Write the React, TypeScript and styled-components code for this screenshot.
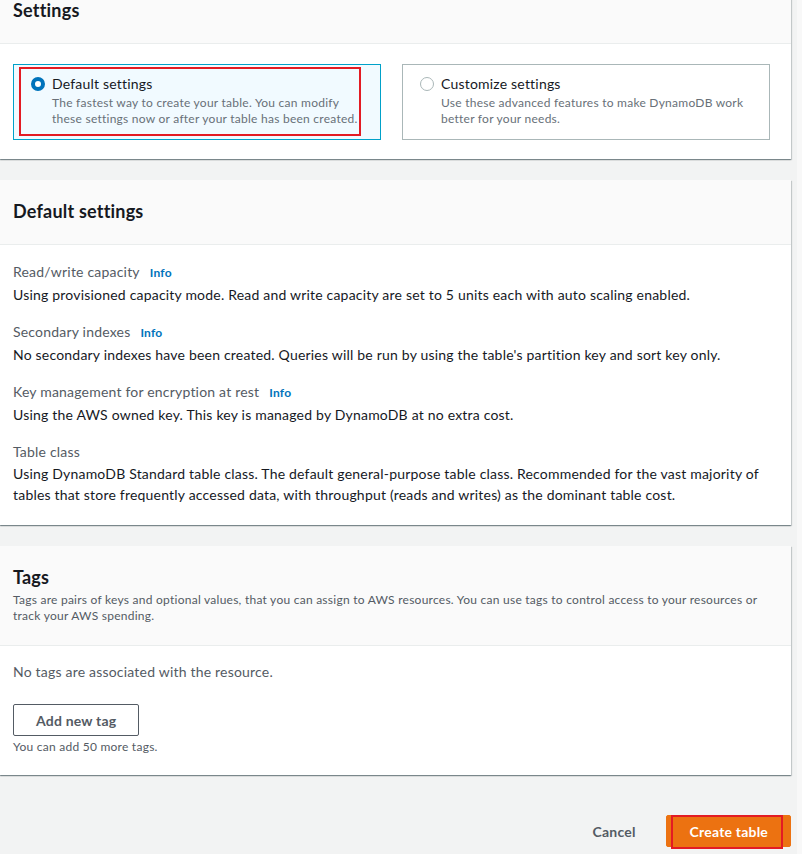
import React from "react";
import styled, { createGlobalStyle } from "styled-components";

const GlobalStyle = createGlobalStyle`
  html, body { margin: 0; padding: 0; }
  body {
    background: #f2f3f3;
    font-family: Lato, "Open Sans", "Liberation Sans", sans-serif;
    letter-spacing: 0.2px;
    color: #16191f;
    overflow: hidden;
  }
`;

const Page = styled.div`
  box-sizing: border-box;
  display: flex;
  flex-direction: column;
  gap: 21px;
  margin-top: -21px;
  width: 802px;
  padding-right: 6px;
  border-right: 5px solid #f8f8f8;
  min-height: 880px;
`;

const Card = styled.section`
  background: #ffffff;
  box-shadow: 0 1px 1px 0 rgba(0, 28, 36, 0.3), 1px 1px 1px 0 rgba(0, 28, 36, 0.15),
    -1px 1px 1px 0 rgba(0, 28, 36, 0.15);
`;

const CardHeader = styled.header<{ $pt?: number; $pb?: number }>`
  background: #fafafa;
  border-bottom: 1px solid #eaeded;
  padding: ${(p) => p.$pt ?? 20}px 13px ${(p) => p.$pb ?? 21}px;
`;

const Title = styled.h2`
  margin: 0;
  font-size: 18px;
  line-height: 22px;
  font-weight: 700;
  color: #16191f;
`;

const HeaderDesc = styled.p`
  margin: 4px 0 0;
  font-size: 12px;
  line-height: 16px;
  letter-spacing: 0.25px;
  color: #545b64;
`;

const TilesBody = styled.div`
  padding: 20px 22px 19px 13px;
  display: grid;
  grid-template-columns: 368px 368px;
  gap: 21px;
`;

const Tile = styled.label<{ $selected?: boolean }>`
  position: relative;
  display: flex;
  gap: 7px;
  align-items: flex-start;
  padding: 8px 12px 12px 17px;
  border: 1px solid ${(p) => (p.$selected ? "#00a1c9" : "#aab7b8")};
  background: ${(p) => (p.$selected ? "#f1faff" : "#ffffff")};
  cursor: pointer;
`;

const Radio = styled.span<{ $checked?: boolean }>`
  flex: none;
  box-sizing: border-box;
  width: 14px;
  height: 14px;
  margin-top: 4px;
  border-radius: 50%;
  background: #fff;
  border: ${(p) => (p.$checked ? "4px solid #0073bb" : "1px solid #aab7b8")};
`;

const TileText = styled.div`
  display: flex;
  flex-direction: column;
`;

const TileTitle = styled.span`
  font-size: 14px;
  line-height: 22px;
  color: #16191f;
`;

const TileDesc = styled.span`
  font-size: 12px;
  line-height: 16px;
  letter-spacing: 0.25px;
  color: #687078;
`;

const Highlight = styled.span<{ $inset: string }>`
  position: absolute;
  inset: ${(p) => p.$inset};
  border: 2px solid #e31b23;
  pointer-events: none;
`;

const DetailsBody = styled.div`
  padding: 16px 13px 20px;
  display: flex;
  flex-direction: column;
  gap: 16px;
`;

const Item = styled.div`
  display: flex;
  flex-direction: column;
`;

const Label = styled.div`
  font-size: 14px;
  line-height: 22px;
  color: #545b64;
`;

const InfoLink = styled.a`
  margin-left: 10px;
  font-size: 12px;
  font-weight: 700;
  color: #0073bb;
  text-decoration: none;
`;

const Value = styled.div`
  font-size: 14px;
  line-height: 21px;
  color: #16191f;
`;

const TagsBody = styled.div`
  padding: 15px 13px 20px;
  display: flex;
  flex-direction: column;
  align-items: flex-start;
`;

const Muted = styled.div`
  font-size: 14px;
  line-height: 22px;
  color: #545b64;
`;

const SecondaryButton = styled.button`
  margin-top: 21px;
  box-sizing: border-box;
  height: 32px;
  padding: 0 22px;
  border: 1px solid #545b64;
  border-radius: 2px;
  background: #fff;
  color: #545b64;
  font-family: inherit;
  letter-spacing: inherit;
  font-size: 14px;
  font-weight: 700;
  cursor: pointer;
`;

const Hint = styled.div`
  margin-top: 3px;
  font-size: 12px;
  line-height: 16px;
  letter-spacing: 0.25px;
  color: #545b64;
`;

const Footer = styled.div`
  display: flex;
  justify-content: flex-end;
  align-items: center;
  gap: 10px;
  padding-top: 19px;
`;

const LinkButton = styled.button`
  height: 32px;
  padding: 0 20px;
  border: none;
  background: transparent;
  color: #545b64;
  font-family: inherit;
  letter-spacing: inherit;
  font-size: 14px;
  font-weight: 700;
  cursor: pointer;
`;

const PrimaryButton = styled.button`
  position: relative;
  box-sizing: border-box;
  height: 32px;
  padding: 0 22px 0 23px;
  border: 1px solid #ec7211;
  border-radius: 2px;
  background: #ec7211;
  color: #fff;
  font-family: inherit;
  letter-spacing: inherit;
  font-size: 14px;
  font-weight: 700;
  cursor: pointer;
`;

const details = [
  {
    label: "Read/write capacity",
    info: true,
    value:
      "Using provisioned capacity mode. Read and write capacity are set to 5 units each with auto scaling enabled.",
  },
  {
    label: "Secondary indexes",
    info: true,
    value:
      "No secondary indexes have been created. Queries will be run by using the table's partition key and sort key only.",
  },
  {
    label: "Key management for encryption at rest",
    info: true,
    value: "Using the AWS owned key. This key is managed by DynamoDB at no extra cost.",
  },
  {
    label: "Table class",
    info: false,
    value:
      "Using DynamoDB Standard table class. The default general-purpose table class. Recommended for the vast majority of tables that store frequently accessed data, with throughput (reads and writes) as the dominant table cost.",
  },
];

export default function App() {
  return (
    <>
      <GlobalStyle />
      <Page>
        <Card>
          <CardHeader $pb={22}>
            <Title>Settings</Title>
          </CardHeader>
          <TilesBody>
            <Tile $selected>
              <Radio $checked />
              <TileText>
                <TileTitle>Default settings</TileTitle>
                <TileDesc>
                  The fastest way to create your table. You can modify these settings now or after your
                  table has been created.
                </TileDesc>
              </TileText>
              <Highlight $inset="2px 19px 3px 5px" />
            </Tile>
            <Tile>
              <Radio />
              <TileText>
                <TileTitle>Customize settings</TileTitle>
                <TileDesc>Use these advanced features to make DynamoDB work better for your needs.</TileDesc>
              </TileText>
            </Tile>
          </TilesBody>
        </Card>

        <Card>
          <CardHeader $pb={22}>
            <Title>Default settings</Title>
          </CardHeader>
          <DetailsBody>
            {details.map((d) => (
              <Item key={d.label}>
                <Label>
                  {d.label}
                  {d.info && <InfoLink href="#">Info</InfoLink>}
                </Label>
                <Value>{d.value}</Value>
              </Item>
            ))}
          </DetailsBody>
        </Card>

        <Card>
          <CardHeader>
            <Title>Tags</Title>
            <HeaderDesc>
              Tags are pairs of keys and optional values, that you can assign to AWS resources. You can use tags
              to control access to your resources or track your AWS spending.
            </HeaderDesc>
          </CardHeader>
          <TagsBody>
            <Muted>No tags are associated with the resource.</Muted>
            <SecondaryButton>Add new tag</SecondaryButton>
            <Hint>You can add 50 more tags.</Hint>
          </TagsBody>
        </Card>

        <Footer>
          <LinkButton>Cancel</LinkButton>
          <PrimaryButton>
            Create table
            <Highlight $inset="-1px 7px -3px 4px" />
          </PrimaryButton>
        </Footer>
      </Page>
    </>
  );
}
